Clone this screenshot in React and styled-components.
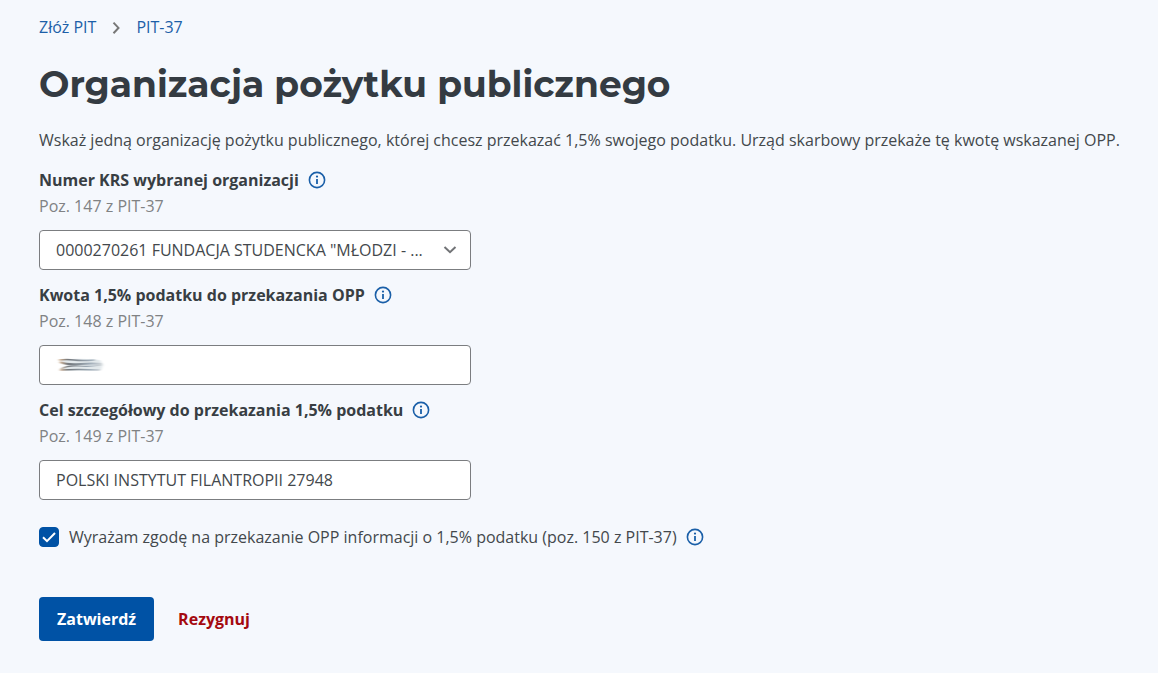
import React, { useState } from "react";
import styled, { createGlobalStyle } from "styled-components";

const GlobalStyle = createGlobalStyle`
  *, *::before, *::after {
    box-sizing: border-box;
  }

  body {
    margin: 0;
    min-height: 100vh;
    background: #f5f8fd;
    color: #43484c;
    font-family: "Open Sans", "Noto Sans", sans-serif;
    font-size: 16px;
    line-height: 24px;
  }

  button, input, select {
    font: inherit;
    color: inherit;
  }
`;

const Page = styled.main`
  padding: 15px 36px 32px 39px;
`;

const Breadcrumbs = styled.nav`
  display: flex;
  align-items: center;
  gap: 12px;
`;

const Crumb = styled.a`
  color: #1c5fa8;
  text-decoration: none;
`;

const Heading = styled.h1`
  margin: 21px 0 20px;
  color: #343b42;
  font-family: Montserrat, Inter, sans-serif;
  font-size: 36px;
  font-weight: 700;
  line-height: 48px;
`;

const Lead = styled.p`
  margin: 0 0 16px;
`;

const Form = styled.form`
  display: flex;
  flex-direction: column;
`;

const Field = styled.div`
  width: 100%;
  max-width: 432px;
  margin-bottom: 13px;
`;

const LabelRow = styled.div`
  display: flex;
  align-items: center;
  gap: 9px;
`;

const Label = styled.label`
  color: #383e43;
  font-weight: 700;
`;

const InfoButton = styled.button`
  display: flex;
  padding: 0;
  border: none;
  background: none;
  color: #1a5fa8;
  cursor: pointer;
`;

const Hint = styled.p`
  margin: 0 0 10px;
  color: #808284;
  line-height: 28px;
`;

const Control = styled.div`
  position: relative;
`;

const Input = styled.input`
  display: block;
  width: 100%;
  height: 40px;
  padding: 0 16px;
  border: 1px solid #7b7d80;
  border-radius: 4px;
  background: #fff;
`;

const Select = styled.select`
  display: block;
  width: 100%;
  height: 40px;
  padding: 0 40px 0 16px;
  border: 1px solid #7b7d80;
  border-radius: 4px;
  background: #fff;
  appearance: none;
`;

const SelectArrow = styled.svg`
  position: absolute;
  top: 12px;
  right: 13px;
  pointer-events: none;
`;

const Smudge = styled.svg`
  position: absolute;
  top: 10px;
  left: 16px;
  pointer-events: none;
`;

const Consent = styled.div`
  display: flex;
  align-items: center;
  gap: 9px;
  margin-top: 12px;
`;

const CheckLabel = styled.label`
  display: flex;
  align-items: center;
  gap: 10px;
`;

const CheckBox = styled.span`
  position: relative;
  display: flex;
  flex: none;
`;

const CheckInput = styled.input`
  width: 20px;
  height: 20px;
  margin: 0;
  border: 1px solid #0052a5;
  border-radius: 4px;
  background: #fff;
  appearance: none;

  &:checked {
    background: #0052a5;
  }
`;

const CheckMark = styled.svg`
  position: absolute;
  inset: 0;
  pointer-events: none;
`;

const Actions = styled.div`
  display: flex;
  gap: 6px;
  margin-top: 48px;
`;

const Button = styled.button`
  height: 44px;
  padding: 0 18px;
  border: none;
  border-radius: 4px;
  background: ${({ $primary }) => ($primary ? "#0052a5" : "transparent")};
  color: ${({ $primary }) => ($primary ? "#fff" : "#a4090f")};
  font-weight: 700;
  cursor: pointer;
`;

const Info = ({ label }) => (
  <InfoButton type="button" aria-label={label}>
    <svg width="18" height="18" viewBox="0 0 18 18" fill="none">
      <circle cx="9" cy="9" r="7.6" stroke="currentColor" strokeWidth="1.6" />
      <path d="M9 8v5" stroke="currentColor" strokeWidth="1.8" />
      <circle cx="9" cy="5.6" r="1.1" fill="currentColor" />
    </svg>
  </InfoButton>
);

const FormField = ({ id, label, position, children }) => (
  <Field>
    <LabelRow>
      <Label htmlFor={id}>{label}</Label>
      <Info label="Informacja" />
    </LabelRow>
    <Hint>Poz. {position} z PIT-37</Hint>
    <Control>{children}</Control>
  </Field>
);

const HiddenAmount = () => (
  <Smudge width="54" height="20" viewBox="0 0 54 20" aria-hidden="true">
    <defs>
      <filter id="soft" x="-20%" y="-50%" width="140%" height="200%">
        <feGaussianBlur stdDeviation="1.6 0.7" />
      </filter>
      <linearGradient id="fade" gradientUnits="userSpaceOnUse" x1="4" y1="0" x2="48" y2="0">
        <stop offset="0" stopColor="#d9b48f" />
        <stop offset="0.2" stopColor="#70757a" />
        <stop offset="0.7" stopColor="#9eabb7" />
        <stop offset="1" stopColor="#d5d9dc" />
      </linearGradient>
    </defs>
    <g filter="url(#soft)" fill="none" stroke="url(#fade)">
      <path d="M5 4.5Q26 3 45 5L48 10L46 15Q27 16 7 15L13 10Z" fill="#e3e9ec" stroke="none" />
      <path d="M4 5Q12 4 19 5T40 5" strokeWidth="1.6" />
      <path d="M5 7Q12 10 25 9T47 9" strokeWidth="2" />
      <path d="M6 14Q13 10 24 11T47 10" strokeWidth="1.2" />
      <path d="M5 15Q22 14 45 15" strokeWidth="1.6" />
    </g>
  </Smudge>
);

const App = () => {
  const [amount, setAmount] = useState("");
  const [purpose, setPurpose] = useState("POLSKI INSTYTUT FILANTROPII 27948");
  const [agreed, setAgreed] = useState(true);

  return (
    <>
      <GlobalStyle />
      <Page>
        <Breadcrumbs>
          <Crumb href="#zloz">Złóż PIT</Crumb>
          <svg width="16" height="16" viewBox="0 0 16 16" fill="none">
            <path d="M5.5 3.6L10.5 8.9L5.5 14.2" stroke="#777" strokeWidth="2" />
          </svg>
          <Crumb href="#pit-37">PIT-37</Crumb>
        </Breadcrumbs>

        <Heading>Organizacja pożytku publicznego</Heading>
        <Lead>
          Wskaż jedną organizację pożytku publicznego, której chcesz przekazać 1,5% swojego
          podatku. Urząd skarbowy przekaże tę kwotę wskazanej OPP.
        </Lead>

        <Form onSubmit={(e) => e.preventDefault()}>
          <FormField id="krs" label="Numer KRS wybranej organizacji" position={147}>
            <Select id="krs">
              <option>0000270261 FUNDACJA STUDENCKA "MŁODZI - ...</option>
            </Select>
            <SelectArrow width="16" height="16" viewBox="0 0 16 16" fill="none">
              <path d="M2.5 5L8 10.2L13.5 5" stroke="#717376" strokeWidth="2" />
            </SelectArrow>
          </FormField>

          <FormField id="amount" label="Kwota 1,5% podatku do przekazania OPP" position={148}>
            <Input id="amount" value={amount} onChange={(e) => setAmount(e.target.value)} />
            {!amount && <HiddenAmount />}
          </FormField>

          <FormField id="purpose" label="Cel szczegółowy do przekazania 1,5% podatku" position={149}>
            <Input id="purpose" value={purpose} onChange={(e) => setPurpose(e.target.value)} />
          </FormField>

          <Consent>
            <CheckLabel htmlFor="consent">
              <CheckBox>
                <CheckInput
                  id="consent"
                  type="checkbox"
                  checked={agreed}
                  onChange={(e) => setAgreed(e.target.checked)}
                />
                <CheckMark width="20" height="20" viewBox="0 0 20 20" fill="none">
                  <path d="M4 10.2L8 14.2L16 6" stroke="#fff" strokeWidth="2" />
                </CheckMark>
              </CheckBox>
              Wyrażam zgodę na przekazanie OPP informacji o 1,5% podatku (poz. 150 z PIT-37)
            </CheckLabel>
            <Info label="Informacja" />
          </Consent>

          <Actions>
            <Button type="submit" $primary>Zatwierdź</Button>
            <Button type="button">Rezygnuj</Button>
          </Actions>
        </Form>
      </Page>
    </>
  );
};

export default App;
